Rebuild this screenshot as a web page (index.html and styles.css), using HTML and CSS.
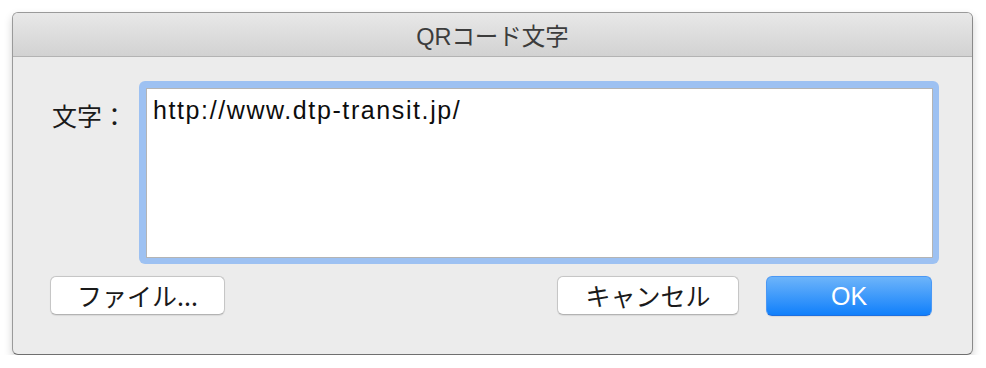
FILE: index.html
```html
<!DOCTYPE html>
<html lang="ja">
<head>
<meta charset="utf-8">
<title>QRコード文字</title>
<link rel="stylesheet" href="styles.css">
</head>
<body>
<div class="window">
  <div class="titlebar">QRコード文字</div>
  <div class="content">
    <div class="field-row">
      <div class="label">文字：</div>
      <div class="focus-ring">
        <div class="textarea">http://www.dtp-transit.jp/</div>
      </div>
    </div>
    <div class="button-row">
      <button class="btn">ファイル...</button>
      <div class="spacer"></div>
      <button class="btn cancel">キャンセル</button>
      <button class="btn primary">OK</button>
    </div>
  </div>
</div>
</body>
</html>
```

FILE: styles.css
```css
html, body {
  margin: 0;
  padding: 0;
  background: #ffffff;
}
body {
  padding: 12px 0 0 12px;
  font-family: "Liberation Sans", "Noto Sans CJK JP", sans-serif;
}
.window {
  width: 959px;
  height: 341px;
  border: 1px solid #9a9a9a;
  border-bottom-color: #6f6f6f;
  border-right-color: #8a8a8a;
  border-radius: 6px;
  background: #ececec;
  overflow: hidden;
  box-shadow: 0 4px 8px rgba(0, 0, 0, 0.18);
  display: flex;
  flex-direction: column;
}
.titlebar {
  box-sizing: border-box;
  height: 44px;
  border-bottom: 1px solid #b3b3b3;
  background: linear-gradient(to bottom, #e8e8e8, #d2d2d2);
  display: flex;
  align-items: center;
  justify-content: center;
  font-size: 23.5px;
  color: #3c3c3c;
  padding-top: 1px;
}
.content {
  flex: 1;
  padding: 24px 33px 0 37px;
  display: flex;
  flex-direction: column;
}
.field-row {
  display: flex;
  align-items: flex-start;
}
.label {
  width: 87px;
  padding-left: 2px;
  padding-top: 19px;
  font-size: 25px;
  line-height: 30px;
  color: #1a1a1a;
  font-family: "Noto Sans CJK JP", sans-serif;
}
.focus-ring {
  flex: 1;
  height: 183px;
  box-sizing: border-box;
  padding: 7px 6px 6px 7px;
  background: #9dc1f2;
  border-radius: 6px;
}
.textarea {
  height: 100%;
  box-sizing: border-box;
  background: #ffffff;
  border: 1px solid #b4b4b4;
  padding: 6px 6px;
  font-size: 25px;
  line-height: 30px;
  letter-spacing: 1.6px;
  color: #0d0d0d;
}
.button-row {
  display: flex;
  margin-top: 12px;
  padding-right: 7px;
}
.spacer {
  flex: 1;
}
.btn {
  height: 39px;
  width: 175px;
  box-sizing: border-box;
  border: 1px solid #c6c6c6;
  border-bottom-color: #b3b3b3;
  border-radius: 6px;
  background: #ffffff;
  font-family: "Noto Sans CJK JP", sans-serif;
  font-size: 25px;
  color: #1a1a1a;
  padding: 0;
  line-height: 1;
  box-shadow: 0 0.5px 1px rgba(0, 0, 0, 0.08);
}
.cancel {
  width: 182px;
}
.primary {
  margin-left: 27px;
  width: 166px;
  height: 40px;
  border: 1px solid #4a98f5;
  border-bottom-color: #1d6fe0;
  background: linear-gradient(to bottom, #6db4fa, #1180fb);
  color: #ffffff;
  font-family: "Liberation Sans", sans-serif;
  font-size: 25px;
}
```
